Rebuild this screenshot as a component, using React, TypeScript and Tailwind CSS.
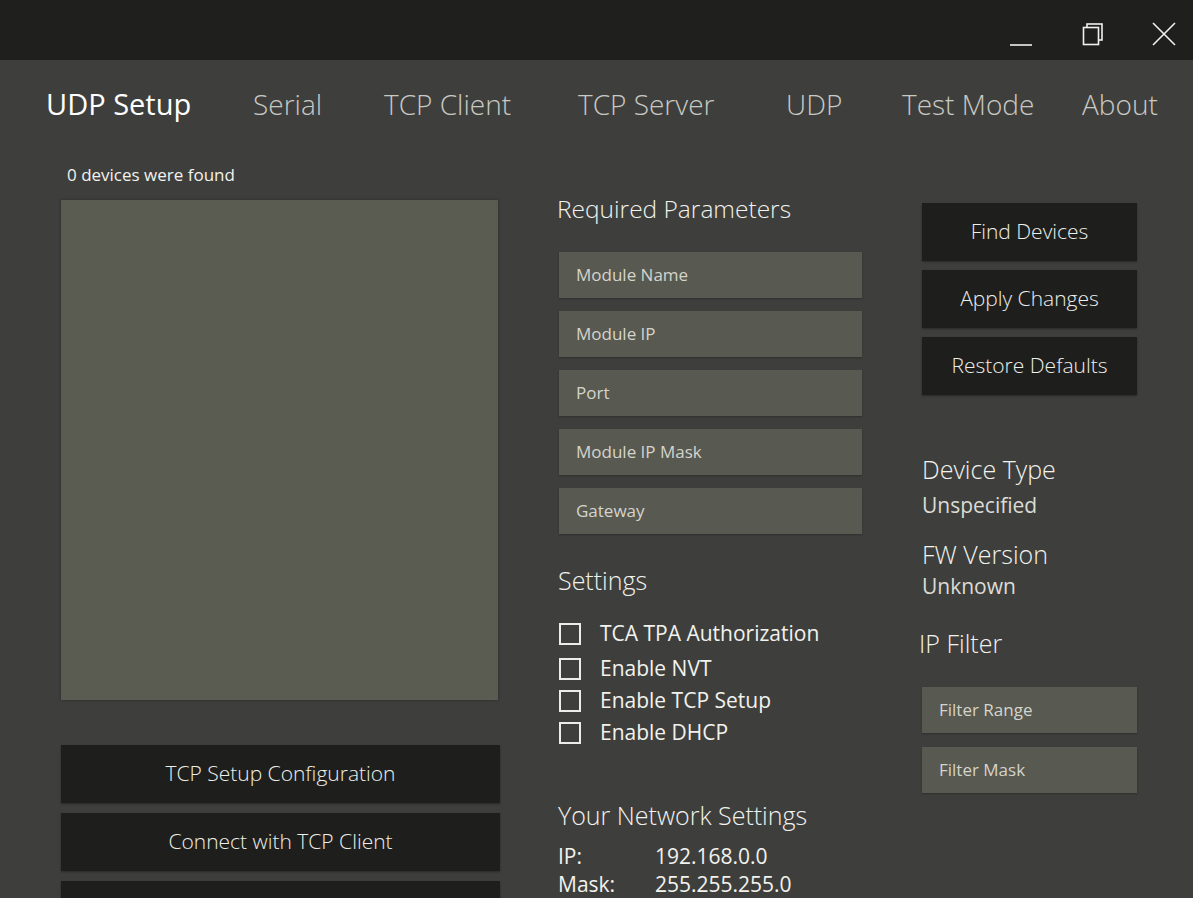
import React from "react";

const tabs = [
  { label: "Serial", w: "w-[131px]" },
  { label: "TCP Client", w: "w-[194px]" },
  { label: "TCP Server", w: "w-[208px]" },
  { label: "UDP", w: "w-[116px]" },
  { label: "Test Mode", w: "w-[180px]" },
  { label: "About", w: "" },
];
const params = ["Module Name", "Module IP", "Port", "Module IP Mask", "Gateway"];
const options = [
  { label: "TCA TPA Authorization", h: "h-[36px]" },
  { label: "Enable NVT", h: "h-[33px]" },
  { label: "Enable TCP Setup", h: "h-[32px]" },
  { label: "Enable DHCP", h: "h-[31px]" },
];

function Field({ label }: { label: string }) {
  return (
    <div className="h-[46px] bg-[#585950] flex items-center px-[17px] text-[17px] text-[#d4d4cc] shadow-[0_1px_2px_rgba(0,0,0,0.25)]">
      {label}
    </div>
  );
}

function DarkButton({ label }: { label: string }) {
  return (
    <button className="h-[58px] bg-[#1e1f1c] text-[#eeeeea] text-[21px] font-light flex items-center justify-center shadow-[0_1px_2px_rgba(0,0,0,0.35)]">
      {label}
    </button>
  );
}

export default function App() {
  return (
    <div
      className="w-[1193px] h-[898px] overflow-hidden bg-[#3e3f3c] text-[#f2f2ee]"
      style={{ fontFamily: '"Open Sans", "Noto Sans", sans-serif' }}
    >
      {/* title bar */}
      <div className="h-[60px] bg-[#1f201e] flex justify-end">
        <div className="w-[60px] h-[60px] pt-[8px] flex items-center justify-center">
          <svg width="24" height="40" viewBox="0 0 24 40">
            <line x1="1" y1="31" x2="23" y2="31" stroke="#f0f0f0" strokeWidth="1.6" />
          </svg>
        </div>
        <div className="w-[84px] h-[60px] pt-[8px] flex items-center justify-center">
          <svg width="24" height="24" viewBox="0 0 24 24">
            <rect x="6" y="2" width="15" height="16" fill="none" stroke="#f0f0f0" strokeWidth="1.6" />
            <rect x="2.5" y="5.5" width="15" height="17" fill="#1f201e" stroke="#f0f0f0" strokeWidth="1.6" />
          </svg>
        </div>
        <div className="w-[58px] h-[60px] pt-[8px] flex items-center justify-center">
          <svg width="24" height="24" viewBox="0 0 24 24">
            <path d="M1 1 L23 23 M23 1 L1 23" stroke="#f0f0f0" strokeWidth="1.6" />
          </svg>
        </div>
      </div>

      {/* tab strip */}
      <div className="flex items-center pl-[46px] h-[88px]">
        <span className="w-[207px] text-[29px] text-white whitespace-nowrap">UDP Setup</span>
        {tabs.map((t) => (
          <span key={t.label} className={`${t.w} text-[28px] font-light text-[#c9c9c4] whitespace-nowrap`}>
            {t.label}
          </span>
        ))}
      </div>

      <div className="flex pl-[61px]">
        {/* left column */}
        <div className="w-[440px] flex flex-col">
          <div className="pl-[6px] mt-[15px] h-[37px] text-[17px] leading-[24px]">0 devices were found</div>
          <div className="w-[437px] h-[500px] bg-[#5a5b51] shadow-[0_0_3px_rgba(0,0,0,0.3)]" />
          <div className="mt-[45px] mr-[1px] flex flex-col gap-[10px]">
            <DarkButton label="TCP Setup Configuration" />
            <DarkButton label="Connect with TCP Client" />
            <DarkButton label="" />
          </div>
        </div>

        {/* middle column */}
        <div className="w-[304px] ml-[57px] flex flex-col">
          <div className="mt-[43px] text-[24.5px] font-light leading-[36px] -ml-[1px]">Required Parameters</div>
          <div className="mt-[25px] flex flex-col gap-[13px] pl-[1px]">
            {params.map((p) => (
              <Field key={p} label={p} />
            ))}
          </div>
          <div className="mt-[28px] text-[25px] font-light leading-[36px]">Settings</div>
          <div className="mt-[18px] flex flex-col">
            {options.map((o) => (
              <label key={o.label} className={`flex items-center gap-[19px] ${o.h}`}>
                <span className="w-[22px] h-[22px] border-2 border-[#ececea] ml-[1px]" />
                <span className="text-[21px]">{o.label}</span>
              </label>
            ))}
          </div>
          <div className="mt-[49px] text-[25px] font-light leading-[36px]">Your Network Settings</div>
          <div className="mt-[9px] text-[21px] leading-[28px] flex flex-col">
            <div className="flex">
              <span className="w-[97px]">IP:</span>
              <span>192.168.0.0</span>
            </div>
            <div className="flex">
              <span className="w-[97px]">Mask:</span>
              <span>255.255.255.0</span>
            </div>
          </div>
        </div>

        {/* right column */}
        <div className="w-[215px] ml-[60px] flex flex-col">
          <div className="mt-[55px] flex flex-col gap-[9px]">
            <DarkButton label="Find Devices" />
            <DarkButton label="Apply Changes" />
            <DarkButton label="Restore Defaults" />
          </div>
          <div className="mt-[56px] text-[25px] font-light leading-[36px]">Device Type</div>
          <div className="text-[21px] leading-[36px] text-[#dcdcd6]">Unspecified</div>
          <div className="mt-[13px] text-[25px] font-light leading-[36px]">FW Version</div>
          <div className="text-[21px] leading-[28px] text-[#dcdcd6]">Unknown</div>
          <div className="mt-[25px] text-[25px] font-light leading-[36px] -ml-[3px]">IP Filter</div>
          <div className="mt-[26px] flex flex-col gap-[14px]">
            <Field label="Filter Range" />
            <Field label="Filter Mask" />
          </div>
        </div>
      </div>
    </div>
  );
}
